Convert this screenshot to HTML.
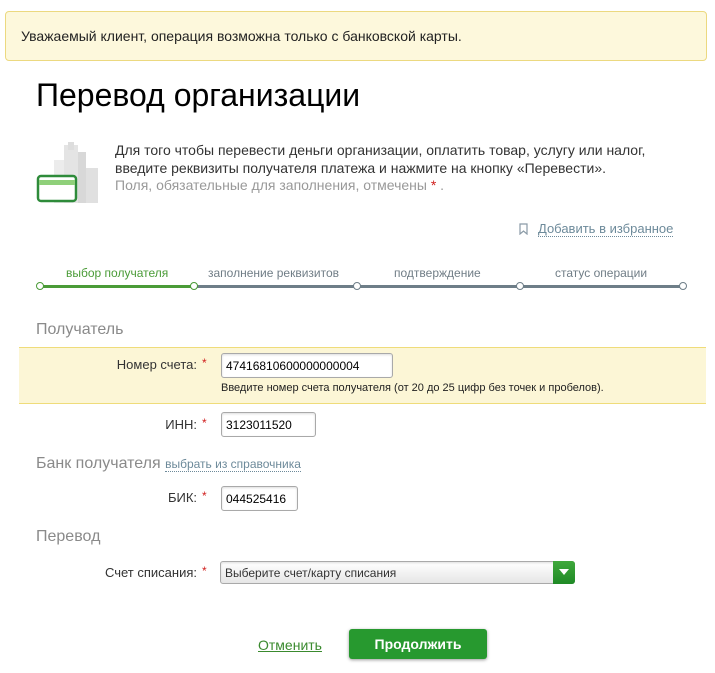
<!DOCTYPE html>
<html><head><meta charset="utf-8"><style>
body{margin:0;width:715px;height:673px;background:#fff;font-family:"Liberation Sans",Arial,sans-serif;position:relative;overflow:hidden;color:#333}
.a{position:absolute;white-space:nowrap}
.banner{left:5px;top:11px;width:700px;height:48px;background:#fdf8dc;border:1px solid #ecd980;border-radius:4px}
.inp{position:absolute;border:1px solid #a9a9a9;border-radius:3px;background:#fff;font-size:12px;color:#000;box-sizing:border-box;padding:5px 0 0 4px;box-shadow:inset 0 1px 2px #ddd}
.lbl{font-size:13px;color:#333;text-align:right}
.st{color:#d0201f;font-size:12px}
.sec{font-size:16px;color:#8a8a8a}
.step{font-size:12px;color:#707d86;top:266px}
.dot{position:absolute;width:6px;height:6px;border:1.5px solid #6e7e88;border-radius:50%;background:#fff;top:282px}
</style></head><body>
<div class="a banner"></div>
<div class="a" style="left:21px;top:28px;font-size:14px;color:#222">Уважаемый клиент, операция возможна только с банковской карты.</div>
<div class="a" style="left:36px;top:77px;font-size:32px;color:#000">Перевод организации</div>
<svg class="a" style="left:36px;top:140px" width="66" height="64" viewBox="0 0 66 64">
<rect x="28" y="5" width="14" height="58" fill="#e4e4e4"/><rect x="32" y="2" width="6" height="8" fill="#ddd"/>
<rect x="42" y="12" width="8" height="51" fill="#d8d8d8"/><rect x="50" y="28" width="12" height="35" fill="#e0e0e0"/>
<rect x="18" y="20" width="10" height="43" fill="#ececec"/>
<rect x="2" y="36" width="38" height="25" rx="3" fill="#fff" stroke="#2e8b3a" stroke-width="2.5"/>
<rect x="3" y="40" width="36" height="5" fill="#8fd07a"/></svg>
<div class="a" style="left:115px;top:142px;font-size:14px;line-height:17.5px">Для того чтобы перевести деньги организации, оплатить товар, услугу или налог,<br>введите реквизиты получателя платежа и нажмите на кнопку «Перевести».<br><span style="color:#999">Поля, обязательные для заполнения, отмечены <span style="color:#d0201f">*</span> .</span></div>
<svg class="a" style="left:519px;top:223px" width="9" height="12"><path d="M1 1h7v10l-3.5-3-3.5 3z" fill="none" stroke="#8a9aa6" stroke-width="1.2"/></svg>
<div class="a" style="left:538px;top:221px;font-size:13px;color:#6d8a9a;border-bottom:1px dotted #6d8a9a;line-height:15px">Добавить в избранное</div>
<div class="a" style="left:40px;top:285px;width:643px;height:3px;background:#6e7e88"></div>
<div class="a" style="left:40px;top:285px;width:154px;height:3px;background:#4a9b37"></div>
<div class="dot" style="left:36px;border-color:#4a9b37"></div><div class="dot" style="left:190px;border-color:#4a9b37"></div>
<div class="dot" style="left:353px"></div><div class="dot" style="left:516px"></div><div class="dot" style="left:679px"></div>
<div class="a step" style="left:66px;color:#4a9b37">выбор получателя</div>
<div class="a step" style="left:208px">заполнение реквизитов</div>
<div class="a step" style="left:394px">подтверждение</div>
<div class="a step" style="left:555px">статус операции</div>
<div class="a sec" style="left:36px;top:321px">Получатель</div>
<div class="a" style="left:19px;top:347px;width:687px;height:55px;background:#fcf6d6;border-top:1px solid #efdc7a;border-bottom:1px solid #efdc7a"></div>
<div class="a lbl" style="left:90px;width:107px;top:357px">Номер счета:</div><div class="a st" style="left:202px;top:356px">*</div>
<div class="inp" style="left:221px;top:353px;width:172px;height:25px">47416810600000000004</div>
<div class="a" style="left:221px;top:382px;font-size:11px;color:#222">Введите номер счета получателя (от 20 до 25 цифр без точек и пробелов).</div>
<div class="a lbl" style="left:90px;width:107px;top:417px">ИНН:</div><div class="a st" style="left:202px;top:416px">*</div>
<div class="inp" style="left:221px;top:412px;width:95px;height:25px">3123011520</div>
<div class="a sec" style="left:36px;top:455px">Банк получателя <span style="font-size:12px;color:#6d8a9a;border-bottom:1px dotted #6d8a9a">выбрать из справочника</span></div>
<div class="a lbl" style="left:90px;width:107px;top:490px">БИК:</div><div class="a st" style="left:202px;top:489px">*</div>
<div class="inp" style="left:221px;top:486px;width:77px;height:25px">044525416</div>
<div class="a sec" style="left:36px;top:528px">Перевод</div>
<div class="a lbl" style="left:50px;width:147px;top:565px">Счет списания:</div><div class="a st" style="left:202px;top:564px">*</div>
<div class="inp" style="left:220px;top:561px;width:355px;height:23px;background:linear-gradient(#fff,#e6e6e6);padding-top:4px;color:#333">Выберите счет/карту списания</div>
<div class="a" style="left:553px;top:561px;width:22px;height:23px;background:linear-gradient(#3fa83b,#1f8a26);border-radius:0 3px 3px 0"></div>
<svg class="a" style="left:559px;top:569px" width="10" height="7"><path d="M0 0h10L5 6z" fill="#fff"/></svg>
<div class="a" style="left:258px;top:637px;font-size:14px;color:#3a8a2e;text-decoration:underline">Отменить</div>
<div class="a" style="left:349px;top:629px;width:138px;height:30px;background:#27992f;border-radius:3px;box-shadow:0 1px 3px #999;color:#fff;font-weight:bold;font-size:14px;text-align:center;line-height:30px">Продолжить</div>
</body></html>
